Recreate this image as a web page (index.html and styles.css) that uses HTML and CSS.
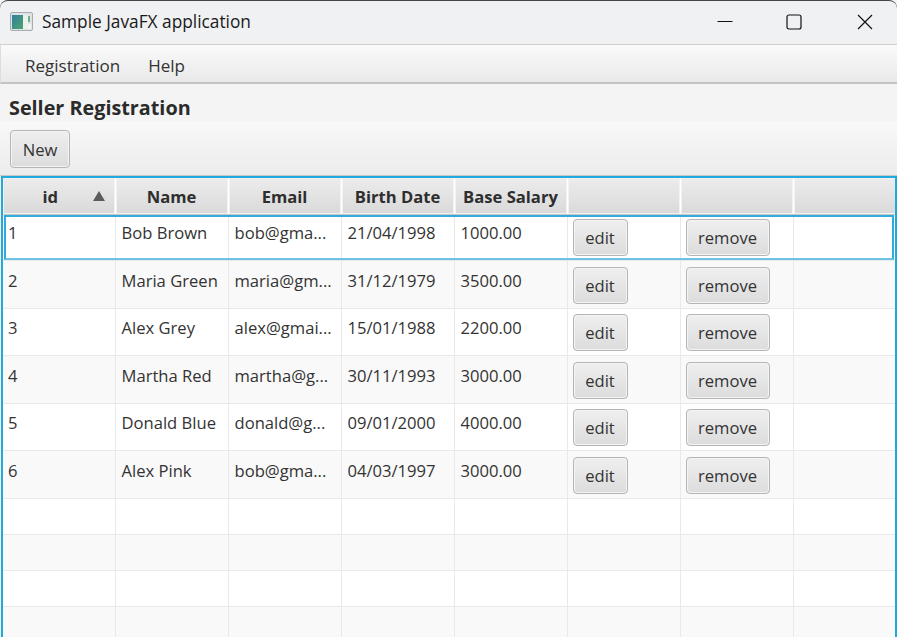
FILE: index.html
```html
<!DOCTYPE html>
<html>
<head>
    <meta charset="utf-8"/>
    <title>Sample JavaFX application</title>
    <link rel="stylesheet" href="styles.css">
</head>
<body>
<div class="window">
    <div class="titlebar">
        <svg class="appicon" width="23" height="19" viewBox="0 0 23 19">
            <defs>
                <linearGradient id="iconfill" x1="0" y1="0" x2="1" y2="1">
                    <stop offset="0" stop-color="#2f7f9f"/>
                    <stop offset="1" stop-color="#4fa56c"/>
                </linearGradient>
            </defs>
            <rect x="0.5" y="0.5" width="22" height="18" rx="1.5" fill="#dfe3e6" stroke="#a8adb1"/>
            <rect x="2" y="3" width="11" height="14" fill="url(#iconfill)"/>
            <rect x="13" y="3" width="5" height="14" fill="#edf1ee"/>
            <rect x="18" y="4" width="2" height="6" fill="#6fb08e"/>
            <rect x="18" y="12" width="3" height="5" fill="#f4f6f5"/>
        </svg>
        <span class="apptitle">Sample JavaFX application</span>
        <div class="winbuttons">
            <svg width="16" height="16" viewBox="0 0 16 16"><path d="M0.5 7.5H15.5" stroke="#111" stroke-width="1" fill="none"/></svg>
            <svg class="maxbtn" width="16" height="16" viewBox="0 0 16 16"><rect x="1" y="1" width="14" height="14" rx="2" stroke="#111" stroke-width="1.2" fill="none"/></svg>
            <svg width="16" height="16" viewBox="0 0 16 16"><path d="M1 1L15 15M15 1L1 15" stroke="#111" stroke-width="1.2" fill="none"/></svg>
        </div>
    </div>

    <div class="menubar">
        <span class="menuitem">Registration</span>
        <span class="menuitem">Help</span>
    </div>

    <div class="heading">Seller Registration</div>

    <div class="toolbar">
        <button class="fxbtn newbtn">New</button>
    </div>

    <div class="tablewrap">
        <table class="sellers">
            <thead>
                <tr>
                    <th class="idcol"><span class="idhead">id</span><span class="sortarrow"></span></th>
                    <th>Name</th>
                    <th>Email</th>
                    <th>Birth Date</th>
                    <th>Base Salary</th>
                    <th></th>
                    <th></th>
                    <th></th>
                </tr>
            </thead>
            <tbody>
                <tr class="filled selected"><td>1</td><td>Bob Brown</td><td>bob@gma...</td><td>21/04/1998</td><td>1000.00</td><td class="action"><button class="fxbtn editbtn">edit</button></td><td class="action"><button class="fxbtn removebtn">remove</button></td><td></td></tr>
                <tr class="filled tall"><td>2</td><td>Maria Green</td><td>maria@gm...</td><td>31/12/1979</td><td>3500.00</td><td class="action"><button class="fxbtn editbtn">edit</button></td><td class="action"><button class="fxbtn removebtn">remove</button></td><td></td></tr>
                <tr class="filled"><td>3</td><td>Alex Grey</td><td>alex@gmai...</td><td>15/01/1988</td><td>2200.00</td><td class="action"><button class="fxbtn editbtn">edit</button></td><td class="action"><button class="fxbtn removebtn">remove</button></td><td></td></tr>
                <tr class="filled tall"><td>4</td><td>Martha Red</td><td>martha@g...</td><td>30/11/1993</td><td>3000.00</td><td class="action"><button class="fxbtn editbtn">edit</button></td><td class="action"><button class="fxbtn removebtn">remove</button></td><td></td></tr>
                <tr class="filled"><td>5</td><td>Donald Blue</td><td>donald@g...</td><td>09/01/2000</td><td>4000.00</td><td class="action"><button class="fxbtn editbtn">edit</button></td><td class="action"><button class="fxbtn removebtn">remove</button></td><td></td></tr>
                <tr class="filled tall"><td>6</td><td>Alex Pink</td><td>bob@gma...</td><td>04/03/1997</td><td>3000.00</td><td class="action"><button class="fxbtn editbtn">edit</button></td><td class="action"><button class="fxbtn removebtn">remove</button></td><td></td></tr>
                <tr class="empty"><td></td><td></td><td></td><td></td><td></td><td></td><td></td><td></td></tr>
                <tr class="empty"><td></td><td></td><td></td><td></td><td></td><td></td><td></td><td></td></tr>
                <tr class="empty"><td></td><td></td><td></td><td></td><td></td><td></td><td></td><td></td></tr>
                <tr class="empty"><td></td><td></td><td></td><td></td><td></td><td></td><td></td><td></td></tr>
            </tbody>
        </table>
        <div class="selectbox"></div>
    </div>
</div>
</body>
</html>
```

FILE: styles.css
```css
html, body {
    margin: 0;
    padding: 0;
    height: 100%;
    overflow: hidden;
    background: #fff;
}
.window {
    width: 897px;
    height: 637px;
    display: flex;
    flex-direction: column;
    overflow: hidden;
    font-family: "Open Sans", "Noto Sans", sans-serif;
    font-size: 16.6px;
    color: #333;
    background: #f4f4f4;
}
.titlebar {
    height: 45px;
    box-sizing: border-box;
    flex: none;
    display: flex;
    align-items: center;
    padding: 0 0 2px 10px;
    background: #f0f1f3;
    border-top: 1px solid #444;
    border-radius: 8px 8px 0 0;
    border-bottom: 1px solid #cfcfcf;
    color: #1a1a1a;
}
.appicon {
    margin-right: 9px;
}
.apptitle {
    font-size: 17.3px;
}
.winbuttons {
    margin-left: auto;
    display: flex;
    gap: 54px;
    padding-right: 24px;
}
.maxbtn {
    margin: 0 1px 0 -1px;
}
.menubar {
    height: 39px;
    box-sizing: border-box;
    flex: none;
    display: flex;
    align-items: center;
    padding: 3px 0 0 24px;
    gap: 28px;
    font-size: 17px;
    background: linear-gradient(#fafafa, #e9e9e9);
    border-bottom: 2px solid #c4c4c4;
    border-left: 1px solid #ddd;
}
.heading {
    height: 38px;
    box-sizing: border-box;
    flex: none;
    padding: 9px 0 0 9px;
    font-size: 19.8px;
    line-height: 30px;
    font-weight: 700;
    background: #f4f4f4;
    color: #2b2b2b;
}
.toolbar {
    height: 54px;
    box-sizing: border-box;
    flex: none;
    padding: 8px 0 0 10px;
    background: linear-gradient(#f8f8f8, #ececec);
    border-bottom: 1px solid #c8c8c8;
}
.fxbtn {
    box-sizing: border-box;
    height: 37px;
    padding: 0;
    font-family: inherit;
    font-size: 16.6px;
    color: #333;
    border: 1px solid #b5b5b5;
    border-radius: 4px;
    background: linear-gradient(#efefef, #dcdcdc);
    box-shadow: inset 0 0 0 1px #f4f4f4;
}
.newbtn {
    width: 60px;
    height: 38px;
}
.editbtn {
    width: 55px;
}
.removebtn {
    width: 84px;
}
.tablewrap {
    flex: 1;
    min-height: 0;
    overflow: hidden;
    position: relative;
    margin: 0 0 0 1px;
    width: 896px;
    box-sizing: border-box;
    border: 2px solid #1fa9dc;
    border-bottom: none;
    background: #fff;
}
.sellers {
    table-layout: fixed;
    width: 903px;
    border-collapse: collapse;
}
.sellers th {
    width: 113px;
    height: 36px;
    box-sizing: border-box;
    padding: 1px 0 0;
    font-size: 16.6px;
    font-weight: 700;
    color: #2e2e2e;
    text-align: center;
    background: linear-gradient(#ececec, #d9d9d9);
    border-right: 1px solid #fff;
    border-bottom: 1px solid #c8c8c8;
    box-shadow: inset 0 0 0 1px #f2f2f2;
    position: relative;
}
.sellers th.idcol {
    width: 112px;
}
.idhead {
    padding-right: 17px;
}
.sortarrow {
    position: absolute;
    right: 10px;
    top: 13px;
    border-left: 6px solid transparent;
    border-right: 6px solid transparent;
    border-bottom: 10px solid #5c5c5c;
}
.sellers td {
    box-sizing: border-box;
    padding: 6px 0 0 6px;
    vertical-align: top;
    line-height: 26px;
    color: #333;
    border-right: 1px solid #e9e9e9;
    border-bottom: 1px solid #e9e9e9;
    overflow: hidden;
    white-space: nowrap;
}
.sellers td:first-child {
    padding-left: 5px;
}
.sellers tbody tr:nth-child(even) td {
    background: #f9f9f9;
}
.filled td {
    height: 47px;
}
.filled.tall td {
    height: 48px;
    padding-top: 7px;
}
.sellers td.action {
    padding: 5px 0 0 5px;
    line-height: 0;
}
.sellers .tall td.action {
    padding-top: 6px;
}
.empty td {
    height: 36px;
}
.selected td {
    height: 46px;
    padding-top: 5px;
}
.sellers .selected td.action {
    padding-top: 4px;
}
.selectbox {
    position: absolute;
    left: 1px;
    right: 1px;
    top: 37px;
    height: 45px;
    box-sizing: border-box;
    border: 2px solid #2eaddc;
    border-bottom-color: #6dc3e4;
    pointer-events: none;
}
```
